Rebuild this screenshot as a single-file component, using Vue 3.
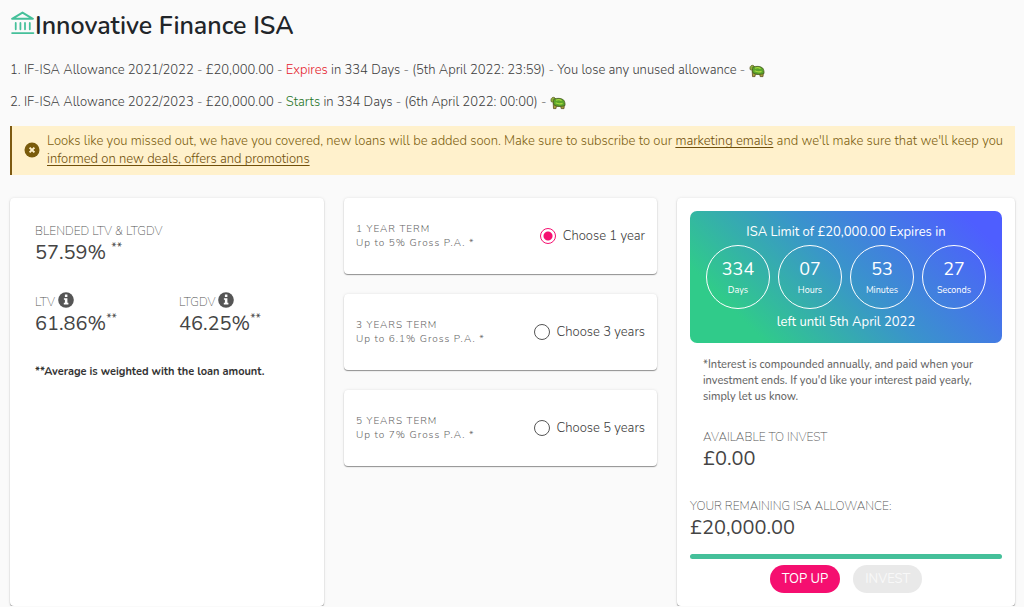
<script setup>
import { ref } from 'vue'

const allowances = [
  { id: 1, years: '2021/2022', verb: 'Expires', tone: 'expires', rest: 'in 334 Days - (5th April 2022: 23:59) - You lose any unused allowance -' },
  { id: 2, years: '2022/2023', verb: 'Starts', tone: 'starts', rest: 'in 334 Days - (6th April 2022: 00:00) -' },
]

const terms = [
  { years: 1, title: '1 YEAR TERM', rate: 'Up to 5% Gross P.A. *', label: 'Choose 1 year' },
  { years: 3, title: '3 YEARS TERM', rate: 'Up to 6.1% Gross P.A. *', label: 'Choose 3 years' },
  { years: 5, title: '5 YEARS TERM', rate: 'Up to 7% Gross P.A. *', label: 'Choose 5 years' },
]
const selected = ref(1)

const countdown = [
  { value: '334', unit: 'Days' },
  { value: '07', unit: 'Hours' },
  { value: '53', unit: 'Minutes' },
  { value: '27', unit: 'Seconds' },
]

const ratios = [
  { name: 'LTV', value: '61.86%' },
  { name: 'LTGDV', value: '46.25%' },
]
</script>

<template>
  <main class="page">
    <h1 class="title">
      <svg class="bank" viewBox="0 0 24 24" aria-hidden="true">
        <path d="M2 8 12 2 22 8Z" fill="none" stroke="currentColor" stroke-width="1.900" stroke-linejoin="round" />
        <path d="M5.500 12v6M10 12v6M14.400 12v6M19 12v6M2 21.700h20.500" fill="none" stroke="currentColor" stroke-width="1.700" stroke-linecap="round" />
      </svg>
      <span>Innovative Finance ISA</span>
    </h1>

    <p v-for="a in allowances" :key="a.id" class="allowance">
      {{ a.id }}. IF-ISA Allowance {{ a.years }} - £20,000.00 -
      <span :class="a.tone">{{ a.verb }}</span> {{ a.rest }}
      <svg class="turtle" viewBox="0 0 16 14" aria-hidden="true">
        <path d="M3.200 7 3.500 12.600H6l.3-2.400h4.400l.5 2.400h2.800l.4-5Z" fill="#a8a43a" stroke="#5b4a22" stroke-width=".8" />
        <path d="M1 5.500C.5 3 1.800 1.300 3.400 1.300c1 0 1.600.5 1.900 1.300L5 6 2.500 6.200Z" fill="#8fae3c" stroke="#5b5a28" stroke-width=".7" />
        <path d="M4 3C7 2 11.500 2 13.600 4c1.300 1.500 1.500 3.500 1.400 5.500-3 1.300-8.500 1.200-11-.6C3.200 7.400 3.200 5.200 4 3Z" fill="#5ba52b" stroke="#4a5a20" stroke-width=".8" />
        <path d="M6 4.200c2-.7 4.300-.5 5.600.7M5.600 6.800c2 1.100 4.800 1.300 7 .6" fill="none" stroke="#a5d63f" stroke-width="1.200" />
      </svg>
    </p>

    <section class="notice">
      <svg class="notice-icon" viewBox="0 0 16 16" aria-hidden="true">
        <circle cx="8" cy="8" r="7.500" fill="currentColor" />
        <path d="m5.600 5.600 4.800 4.800m0-4.800-4.800 4.800" stroke="#fff1cc" stroke-width="2" />
      </svg>
      <p>
        Looks like you missed out, we have you covered, new loans will be added soon. Make sure to subscribe to our
        <a href="#">marketing emails</a> and we'll make sure that we'll keep you
        <a href="#">informed on new deals, offers and promotions</a>
      </p>
    </section>

    <div class="columns">
      <section class="card stats">
        <div>
          <div class="caption">BLENDED LTV &amp; LTGDV</div>
          <div class="amount">57.59% <sup>**</sup></div>
        </div>
        <div class="ratios">
          <div v-for="r in ratios" :key="r.name">
            <div class="caption with-icon">
              {{ r.name }}
              <svg class="info" viewBox="0 0 16 16" aria-hidden="true">
                <circle cx="8" cy="8" r="7.800" fill="#555" />
                <path d="M6.900 2.600h2.500v2.300H6.900ZM5.900 6.200h3.500v4.600h1v1.600H5.800v-1.600h1.100V7.800h-1Z" fill="#fff" />
              </svg>
            </div>
            <div class="amount">{{ r.value }}<sup>**</sup></div>
          </div>
        </div>
        <p class="note">**Average is weighted with the loan amount.</p>
      </section>

      <div class="terms">
        <section v-for="t in terms" :key="t.years" class="card term">
          <div class="term-text">{{ t.title }}<br />{{ t.rate }}</div>
          <label class="choice">
            <input v-model="selected" type="radio" name="term" :value="t.years" />
            <span>{{ t.label }}</span>
          </label>
        </section>
      </div>

      <section class="card invest">
        <div class="banner">
          <div>ISA Limit of £20,000.00 Expires in</div>
          <div class="clock">
            <div v-for="c in countdown" :key="c.unit" class="dial">
              <span class="num">{{ c.value }}</span>
              <span class="unit">{{ c.unit }}</span>
            </div>
          </div>
          <div>left until 5th April 2022</div>
        </div>
        <p class="interest">
          *Interest is compounded annually, and paid when your investment ends. If you'd like your interest paid yearly, simply let us know.
        </p>
        <div class="available">
          <div class="caption">AVAILABLE TO INVEST</div>
          <div class="amount">£0.00</div>
        </div>
        <div class="remaining">
          <div class="caption">YOUR REMAINING ISA ALLOWANCE:</div>
          <div class="amount">£20,000.00</div>
        </div>
        <div class="meter" role="progressbar" aria-label="Remaining allowance" aria-valuenow="100"></div>
        <div class="actions">
          <button type="button" class="primary">TOP UP</button>
          <button type="button" disabled>INVEST</button>
        </div>
      </section>
    </div>
  </main>
</template>

<style>
body {
  background: #fafafa;
}
</style>

<style scoped>
.page {
  padding: 8px 9px 0 10px;
  font-family: Nunito, Lato, "Noto Sans", sans-serif;
  font-size: 13px;
  font-weight: 300;
  line-height: 18px;
  color: #3c3c3c;
}
.title {
  display: flex;
  align-items: center;
  margin: 0 0 17px;
  font-size: 25px;
  line-height: 36px;
  font-weight: 600;
  color: #212529;
}
.bank {
  width: 25px;
  height: 26px;
  margin-bottom: 6px;
  color: #45c09a;
}
.allowance {
  margin: 0 0 14px;
}
.expires {
  color: #e5192b;
}
.starts {
  color: #1f7526;
}
.turtle {
  width: 16px;
  height: 14px;
  vertical-align: -4px;
}
.notice {
  display: flex;
  align-items: center;
  gap: 7px;
  margin: 15px 0 23px;
  padding: 6px 12px 7px;
  border-left: 2px solid #7d5a12;
  background: #fff1cc;
  color: #7d5f10;
}
.notice p {
  margin: 0;
}
.notice a {
  color: #704f0a;
  text-underline-offset: 2px;
}
.notice-icon {
  flex: none;
  width: 16px;
  height: 16px;
  color: #7a5c0c;
}
.columns {
  display: grid;
  grid-template-columns: 314fr 313fr 338fr;
  gap: 20px;
}
.card {
  border-radius: 4px;
  background: #fff;
  box-shadow: 0 1px 1px rgba(0, 0, 0, 0.4), 0 0 3px rgba(0, 0, 0, 0.1);
}
.stats {
  padding: 24px 25px;
}
.caption {
  font-size: 12px;
  font-weight: 200;
  line-height: 18px;
  color: #555;
}
.with-icon {
  display: flex;
  align-items: center;
  gap: 3px;
}
.info {
  width: 16px;
  height: 16px;
  margin-bottom: 3px;
}
.amount {
  font-size: 20px;
  font-weight: 400;
  line-height: 26px;
  color: #444;
}
.amount sup {
  font-size: 12px;
  line-height: 0;
}
.ratios {
  display: grid;
  grid-template-columns: 144px 1fr;
  margin-top: 26px;
}
.note {
  margin: 26px 0 0;
  font-size: 11px;
  font-weight: 700;
  color: #333;
}
.terms {
  display: flex;
  flex-direction: column;
  gap: 20px;
}
.term {
  display: flex;
  align-items: center;
  justify-content: space-between;
  min-height: 76px;
  padding: 0 12px;
}
.term-text {
  font-size: 10px;
  line-height: 14px;
  letter-spacing: 1px;
  color: #666;
}
.choice {
  display: flex;
  align-items: center;
  gap: 7px;
}
.choice input {
  appearance: none;
  width: 16px;
  height: 16px;
  margin: 0;
  border: 1px solid #555;
  border-radius: 50%;
}
.choice input:checked {
  border-color: #f50f70;
  background: radial-gradient(circle, #f50f70 4px, transparent 5px);
}
.invest {
  padding: 13px;
}
.banner {
  display: flex;
  flex-direction: column;
  align-items: center;
  gap: 4px;
  padding: 12px 0;
  border-radius: 7px;
  background: linear-gradient(45deg, #30cb8a 17%, #3a93cc 52%, #4e5eff 91%);
  color: #fff;
  font-weight: 400;
}
.clock {
  display: flex;
  gap: 8px;
}
.dial {
  box-sizing: border-box;
  display: flex;
  flex-direction: column;
  align-items: center;
  width: 64px;
  height: 64px;
  padding-top: 12px;
  border: 1px solid #fff;
  border-radius: 50%;
}
.num {
  font-size: 18px;
  line-height: 22px;
}
.unit {
  font-size: 9px;
  line-height: 20px;
}
.interest {
  margin: 14px 13px 0;
  font-size: 11px;
  line-height: 16px;
  font-weight: 500;
  color: #666;
}
.available {
  margin: 23px 13px 0;
}
.remaining {
  margin-top: 25px;
}
.meter {
  height: 5px;
  margin: 13px 0 6px;
  border-radius: 3px;
  background: #45c09a;
}
.actions {
  display: flex;
  justify-content: center;
  gap: 13px;
}
.actions button {
  height: 28px;
  padding: 0 12px;
  border: 0;
  border-radius: 14px;
  background: #e9e9e9;
  color: #f8f8f8;
  font-family: inherit;
  font-size: 13px;
}
.actions .primary {
  background: #f50f70;
  color: #fff;
}
</style>
